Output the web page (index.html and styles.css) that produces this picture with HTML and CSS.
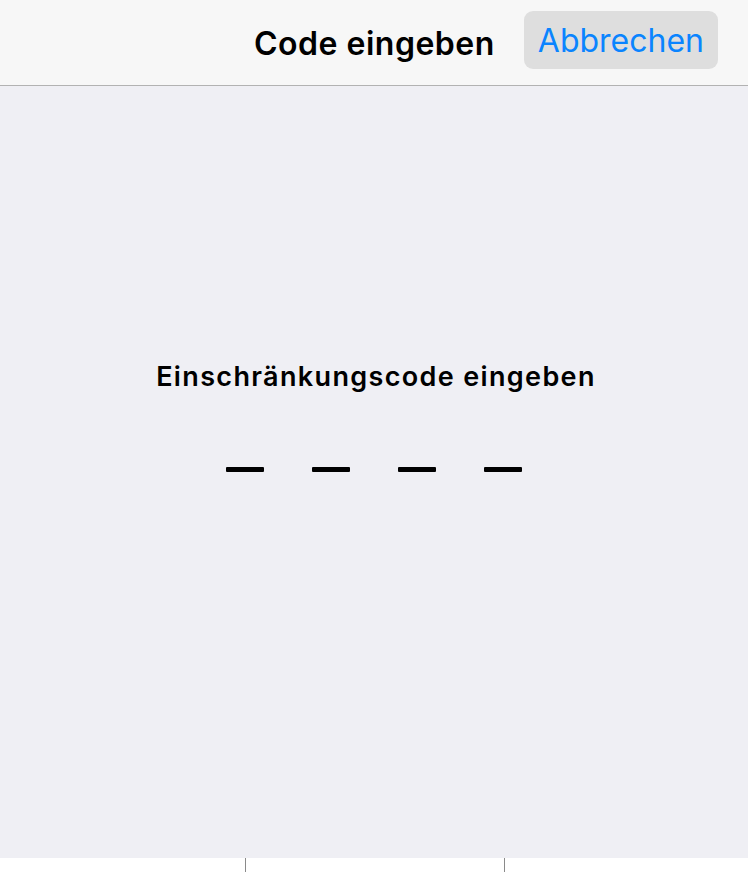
FILE: index.html
```html
<!DOCTYPE html>
<html>
<head>
    <link rel="stylesheet" href="styles.css">
</head>

<body class="flex-col">
    <div id="header" class="flex">
        <h1 class="title">Code eingeben</h1>
        <button class="cancel">Abbrechen</button>
    </div>

    <div id="content" class="flex-grow flex-col">
        <div class="prompt">Einschränkungscode eingeben</div>
        <div class="dashes flex">
            <span class="dash"></span>
            <span class="dash"></span>
            <span class="dash"></span>
            <span class="dash"></span>
        </div>
    </div>

    <div id="keypad">
        <div class="key"></div>
        <div class="key"></div>
        <div class="key"></div>
    </div>
</body>

</html>
```

FILE: styles.css
```css
/* Helpers */
.flex {
    display: flex;
}
.flex-col {
    display: flex;
    flex-direction: column;
}
.flex-grow { flex-grow: 1; }

/* General */
body, html {
    margin: 0;
    padding: 0;
    height: 100%;
    overflow: hidden;
}
body {
    font-family: Inter, "Liberation Sans", sans-serif;
    background: #efeff4;
    color: #000;
}

#header {
    flex-shrink: 0;
    height: 85px;
    background: #f7f7f7;
    border-bottom: 1px solid #b2b2b2;
    align-items: center;
    justify-content: flex-end;
    padding-right: 30px;
    box-sizing: content-box;
}
.title {
    margin: 1px 29px 0 0;
    font-size: 32px;
    font-weight: 600;
    letter-spacing: 0.5px;
}
.cancel {
    margin-top: -6px;
    height: 58px;
    padding: 2px 14px 0;
    border: none;
    border-radius: 9px;
    background: #dedede;
    color: #0a84ff;
    font-family: inherit;
    font-size: 32px;
    font-weight: 400;
    letter-spacing: 0;
}

#content {
    align-items: center;
    padding-top: 274px;
}
.prompt {
    padding-left: 4px;
    font-size: 27px;
    font-weight: 600;
    line-height: 34px;
    letter-spacing: 1.35px;
}
.dashes {
    margin-top: 73px;
    gap: 48px;
}
.dash {
    width: 38px;
    height: 5px;
    border-radius: 1px;
    background: #000;
}

#keypad {
    flex-shrink: 0;
    height: 14px;
    background: #fff;
    display: grid;
    grid-template-columns: 245px 259px 1fr;
}
.key + .key { border-left: 1px solid #8a8a8a; }
```
